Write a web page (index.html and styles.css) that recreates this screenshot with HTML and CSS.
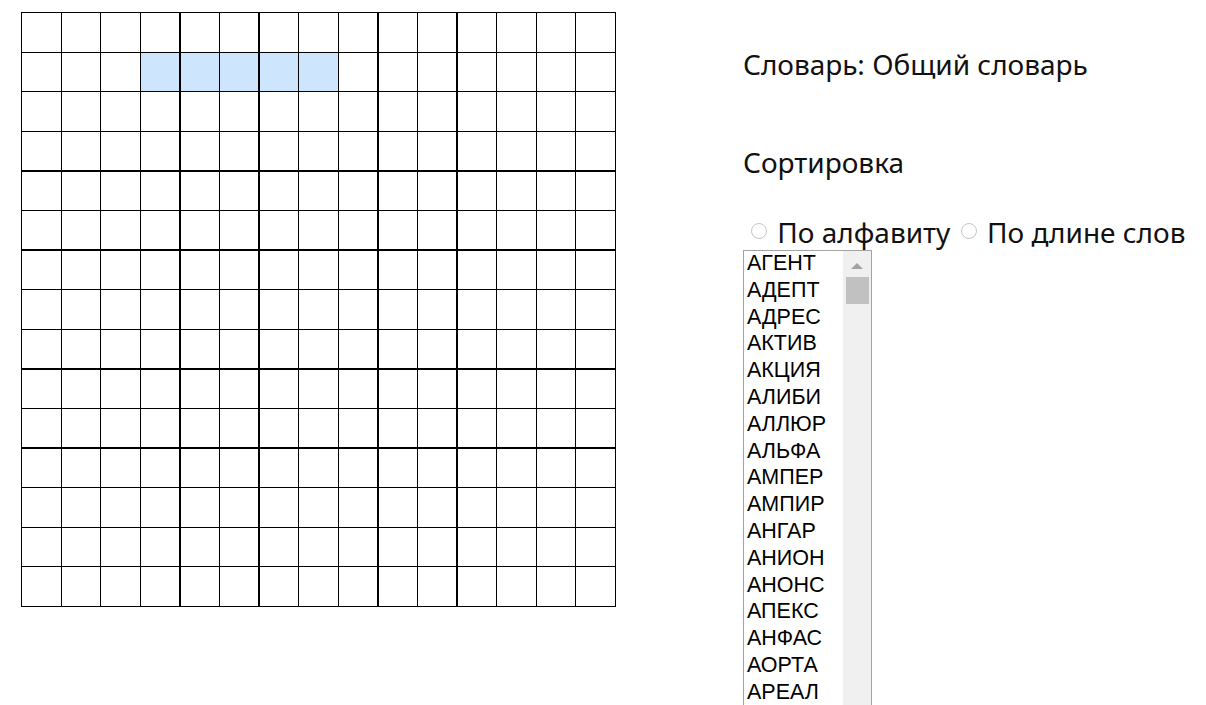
FILE: index.html
```html
<!DOCTYPE html>
<html lang="ru">
<head>
<meta charset="utf-8">
<title>Словарь</title>
<link rel="stylesheet" href="styles.css">
</head>
<body>
<div class="page">
  <div class="board">
    <div class="c"></div><div class="c"></div><div class="c"></div><div class="c"></div><div class="c"></div><div class="c"></div><div class="c"></div><div class="c"></div><div class="c"></div><div class="c"></div><div class="c"></div><div class="c"></div><div class="c"></div><div class="c"></div><div class="c"></div>
    <div class="c"></div><div class="c"></div><div class="c"></div><div class="c sel"></div><div class="c sel"></div><div class="c sel"></div><div class="c sel"></div><div class="c sel"></div><div class="c"></div><div class="c"></div><div class="c"></div><div class="c"></div><div class="c"></div><div class="c"></div><div class="c"></div>
    <div class="c"></div><div class="c"></div><div class="c"></div><div class="c"></div><div class="c"></div><div class="c"></div><div class="c"></div><div class="c"></div><div class="c"></div><div class="c"></div><div class="c"></div><div class="c"></div><div class="c"></div><div class="c"></div><div class="c"></div>
    <div class="c"></div><div class="c"></div><div class="c"></div><div class="c"></div><div class="c"></div><div class="c"></div><div class="c"></div><div class="c"></div><div class="c"></div><div class="c"></div><div class="c"></div><div class="c"></div><div class="c"></div><div class="c"></div><div class="c"></div>
    <div class="c"></div><div class="c"></div><div class="c"></div><div class="c"></div><div class="c"></div><div class="c"></div><div class="c"></div><div class="c"></div><div class="c"></div><div class="c"></div><div class="c"></div><div class="c"></div><div class="c"></div><div class="c"></div><div class="c"></div>
    <div class="c"></div><div class="c"></div><div class="c"></div><div class="c"></div><div class="c"></div><div class="c"></div><div class="c"></div><div class="c"></div><div class="c"></div><div class="c"></div><div class="c"></div><div class="c"></div><div class="c"></div><div class="c"></div><div class="c"></div>
    <div class="c"></div><div class="c"></div><div class="c"></div><div class="c"></div><div class="c"></div><div class="c"></div><div class="c"></div><div class="c"></div><div class="c"></div><div class="c"></div><div class="c"></div><div class="c"></div><div class="c"></div><div class="c"></div><div class="c"></div>
    <div class="c"></div><div class="c"></div><div class="c"></div><div class="c"></div><div class="c"></div><div class="c"></div><div class="c"></div><div class="c"></div><div class="c"></div><div class="c"></div><div class="c"></div><div class="c"></div><div class="c"></div><div class="c"></div><div class="c"></div>
    <div class="c"></div><div class="c"></div><div class="c"></div><div class="c"></div><div class="c"></div><div class="c"></div><div class="c"></div><div class="c"></div><div class="c"></div><div class="c"></div><div class="c"></div><div class="c"></div><div class="c"></div><div class="c"></div><div class="c"></div>
    <div class="c"></div><div class="c"></div><div class="c"></div><div class="c"></div><div class="c"></div><div class="c"></div><div class="c"></div><div class="c"></div><div class="c"></div><div class="c"></div><div class="c"></div><div class="c"></div><div class="c"></div><div class="c"></div><div class="c"></div>
    <div class="c"></div><div class="c"></div><div class="c"></div><div class="c"></div><div class="c"></div><div class="c"></div><div class="c"></div><div class="c"></div><div class="c"></div><div class="c"></div><div class="c"></div><div class="c"></div><div class="c"></div><div class="c"></div><div class="c"></div>
    <div class="c"></div><div class="c"></div><div class="c"></div><div class="c"></div><div class="c"></div><div class="c"></div><div class="c"></div><div class="c"></div><div class="c"></div><div class="c"></div><div class="c"></div><div class="c"></div><div class="c"></div><div class="c"></div><div class="c"></div>
    <div class="c"></div><div class="c"></div><div class="c"></div><div class="c"></div><div class="c"></div><div class="c"></div><div class="c"></div><div class="c"></div><div class="c"></div><div class="c"></div><div class="c"></div><div class="c"></div><div class="c"></div><div class="c"></div><div class="c"></div>
    <div class="c"></div><div class="c"></div><div class="c"></div><div class="c"></div><div class="c"></div><div class="c"></div><div class="c"></div><div class="c"></div><div class="c"></div><div class="c"></div><div class="c"></div><div class="c"></div><div class="c"></div><div class="c"></div><div class="c"></div>
    <div class="c"></div><div class="c"></div><div class="c"></div><div class="c"></div><div class="c"></div><div class="c"></div><div class="c"></div><div class="c"></div><div class="c"></div><div class="c"></div><div class="c"></div><div class="c"></div><div class="c"></div><div class="c"></div><div class="c"></div>
  </div>

  <div class="side">
    <p class="title">Словарь: Общий словарь</p>
    <p class="title sort">Сортировка</p>
    <div class="radios">
      <label class="opt"><span class="radio"></span> По алфавиту</label>
      <label class="opt"><span class="radio"></span> По длине слов</label>
    </div>
    <div class="listbox">
      <ul class="words">
        <li>АГЕНТ</li>
        <li>АДЕПТ</li>
        <li>АДРЕС</li>
        <li>АКТИВ</li>
        <li>АКЦИЯ</li>
        <li>АЛИБИ</li>
        <li>АЛЛЮР</li>
        <li>АЛЬФА</li>
        <li>АМПЕР</li>
        <li>АМПИР</li>
        <li>АНГАР</li>
        <li>АНИОН</li>
        <li>АНОНС</li>
        <li>АПЕКС</li>
        <li>АНФАС</li>
        <li>АОРТА</li>
        <li>АРЕАЛ</li>
      </ul>
      <div class="scrollbar">
        <div class="sb-btn"><span class="arrow"></span></div>
        <div class="thumb"></div>
      </div>
    </div>
  </div>
</div>
</body>
</html>
```

FILE: styles.css
```css
html, body {
  margin: 0;
  padding: 0;
  background: #fff;
  overflow: hidden;
  height: 705px;
}

.page {
  display: flex;
  align-items: flex-start;
  gap: 127px;
  padding: 12px 0 0 21px;
}

.board {
  width: 595px;
  height: 595px;
  box-sizing: border-box;
  display: grid;
  grid-template-columns: repeat(15, 1fr);
  grid-template-rows: repeat(15, 1fr);
  gap: 1.333px;
  padding: 1.333px;
  background: #000;
  flex: none;
}

.c {
  background: #fff;
}

.c.sel {
  background: #cde5fd;
}

.side {
  display: flex;
  flex-direction: column;
  font-family: "Noto Sans", "Open Sans", sans-serif;
  color: #111;
  font-size: 28px;
}

.title {
  margin: 33px 0 0;
  line-height: 38px;
}

.title.sort {
  margin-top: 60px;
}

.radios {
  margin-top: 33px;
  line-height: 36px;
  white-space: nowrap;
}

.opt {
  display: inline;
}

.radio {
  display: inline-block;
  width: 14px;
  height: 14px;
  border: 1px solid #c6c6c6;
  border-radius: 50%;
  background: #fff;
  margin: 0 3px 0 8px;
  vertical-align: 4px;
}

.opt + .opt .radio {
  margin-left: 3px;
}

.listbox {
  width: 129px;
  height: 470px;
  box-sizing: border-box;
  border: 1px solid #a3a3a3;
  display: flex;
  overflow: hidden;
}

.words {
  list-style: none;
  margin: 0;
  padding: 0;
  flex: 1;
  font-family: "Liberation Sans", Arial, sans-serif;
  font-size: 21.5px;
  color: #000;
}

.words li {
  height: 26.8px;
  line-height: 25px;
  box-sizing: border-box;
  padding: 0 0 1.8px 3px;
  white-space: nowrap;
}

.scrollbar {
  width: 28px;
  flex: none;
  background: #f0f0f0;
  display: flex;
  flex-direction: column;
  align-items: center;
}

.sb-btn {
  height: 26px;
  width: 100%;
  display: flex;
  align-items: center;
  justify-content: center;
}

.arrow {
  width: 0;
  height: 0;
  border-left: 6.5px solid transparent;
  border-right: 6.5px solid transparent;
  border-bottom: 6px solid #a3a3a3;
  margin-top: 4px;
}

.thumb {
  width: 23px;
  height: 27px;
  background: #c1c1c1;
}
```
